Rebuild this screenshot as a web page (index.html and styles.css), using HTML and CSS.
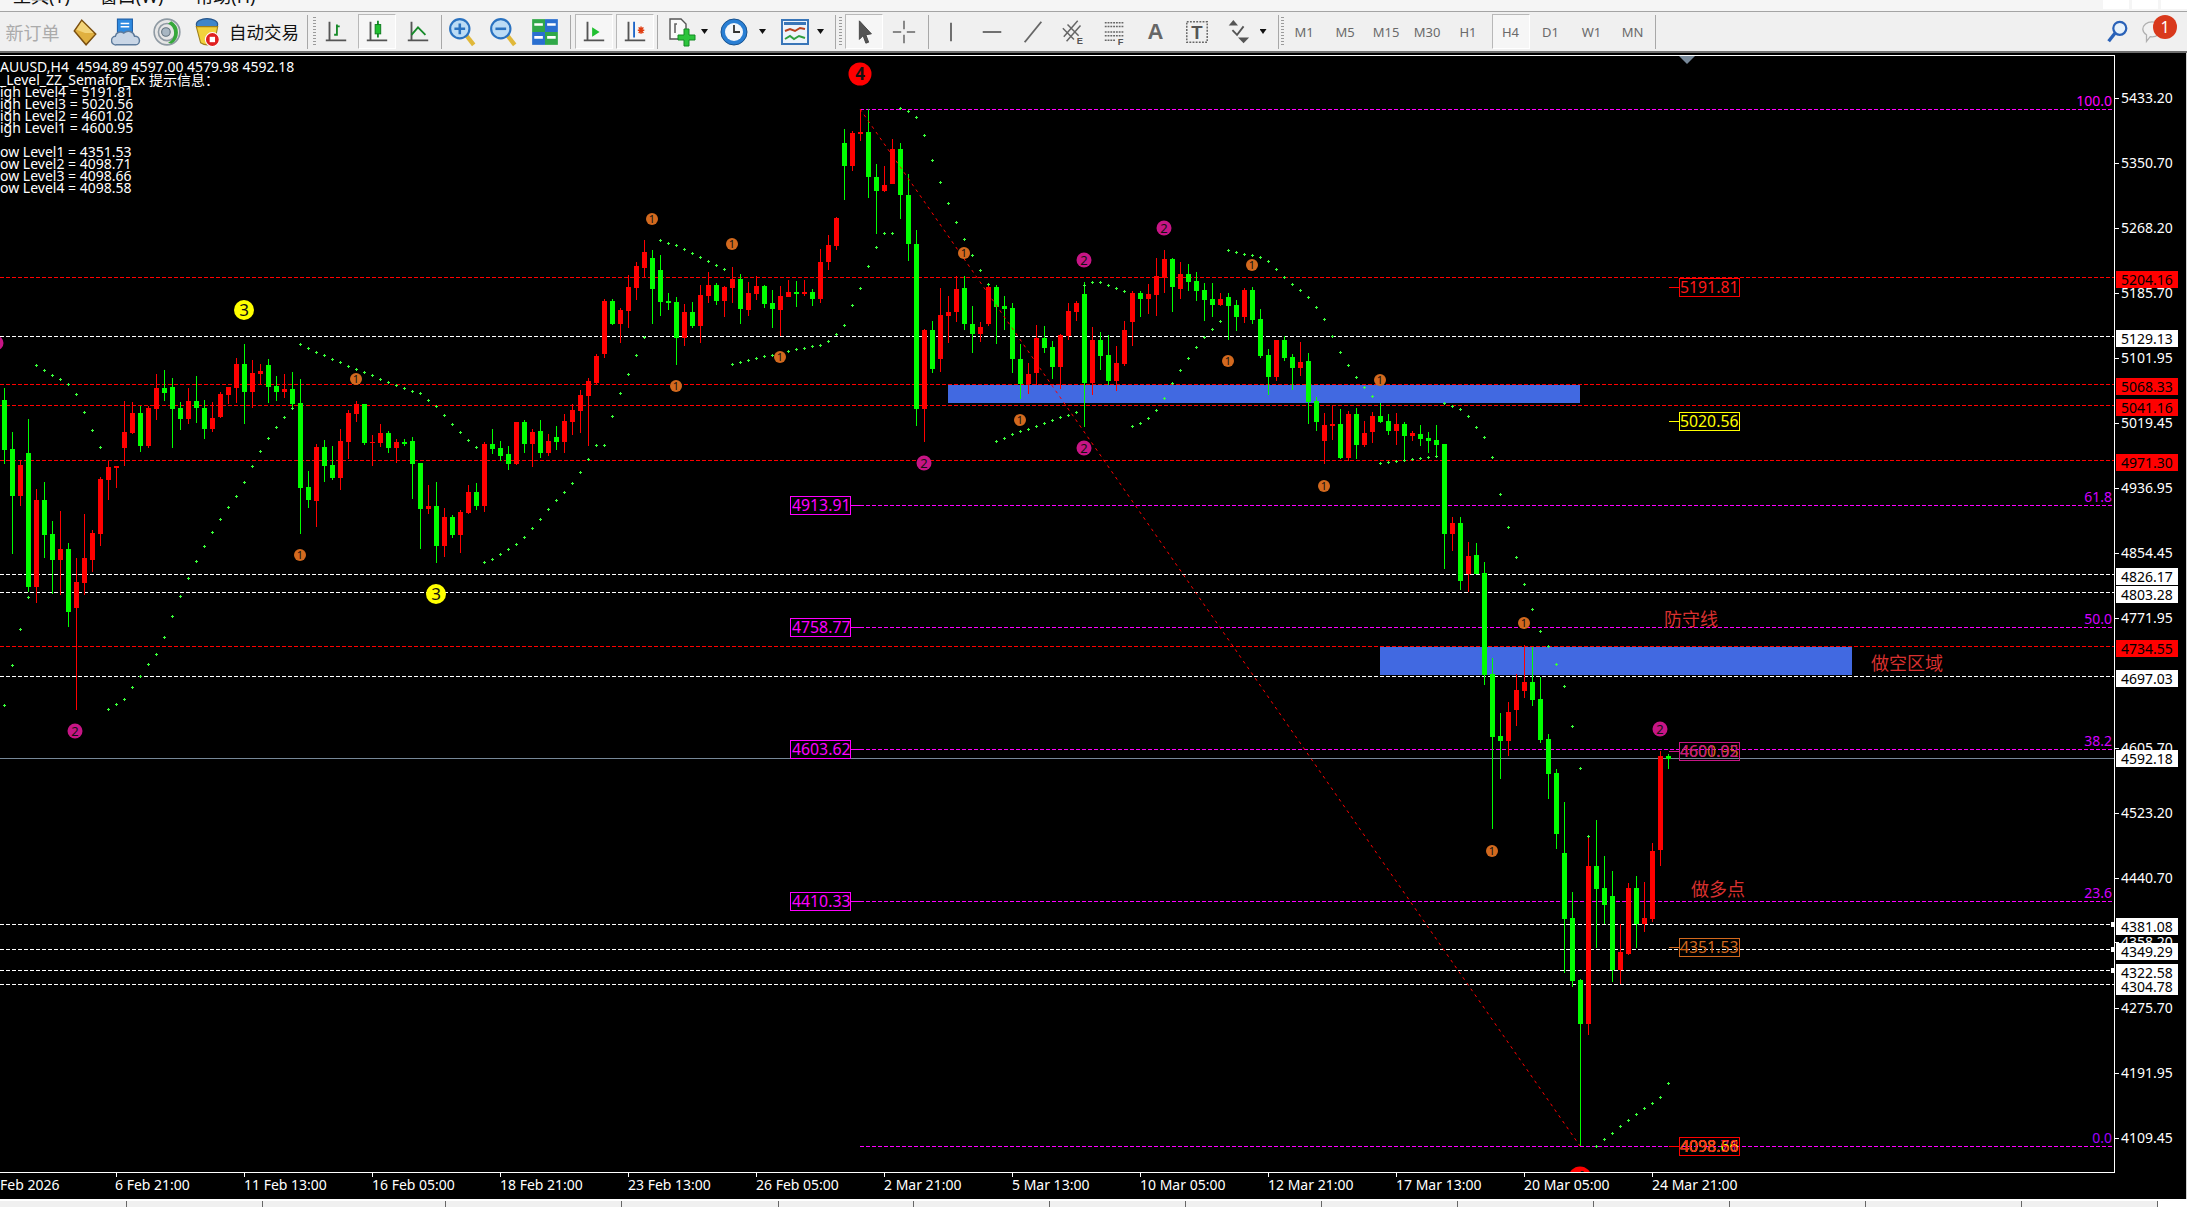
FILE: index.html
```html
<!DOCTYPE html>
<html lang="zh">
<head>
<meta charset="utf-8">
<title>AUUSD,H4</title>
<link rel="stylesheet" href="styles.css">
</head>
<body>
<div class="app">
  <div class="menu">
    <span class="menu-item first">工具(T)</span>
    <span class="menu-item second">窗口(W)</span>
    <span class="menu-item third">帮助(H)</span>
    <span class="winbtns"><i></i><i></i><i></i></span>
  </div>
  <div class="toolbar">
    <span class="neworder">新订单</span>
    <span class="b"><svg class="ic big" viewBox="0 0 28 28"><path d="M11 3 L24 16 L15 26 L4 13Z" fill="#e0b040" stroke="#7a4f10" stroke-width="1.4"/><path d="M11 4 L22 15 L14 15 L6 12Z" fill="#f3d47a"/></svg></span>
    <span class="b"><svg class="ic big" viewBox="0 0 28 28"><path d="M6 2H20V15H6Z" fill="#2d8ae0" stroke="#1c5fa8"/><path d="M9 6h8M9 9h8" stroke="#fff" stroke-width="1.4"/><path d="M5 26a4 4 0 0 1-1-8a5 5 0 0 1 8-3a6 6 0 0 1 10 3a4 4 0 0 1 1 8Z" fill="#c9d6e6" stroke="#5d7b9c" stroke-width="1.4"/></svg></span>
    <span class="b"><svg class="ic big" viewBox="0 0 28 28"><circle cx="14" cy="14" r="12" fill="#e6e6e6" stroke="#8f9aa3" stroke-width="1.5"/><circle cx="14" cy="14" r="8" fill="none" stroke="#8f9aa3" stroke-width="1.5"/><circle cx="13" cy="14" r="4" fill="#a8b6c2" stroke="#60707c"/><path d="M18 4a12 12 0 0 1 0 21l-3-1a10 10 0 0 0 0-18Z" fill="#35a83a"/></svg></span>
    <span class="b narrow"><svg class="ic big" viewBox="0 0 28 28"><ellipse cx="14" cy="7" rx="10" ry="5.5" fill="#3f86c9" stroke="#24548a"/><path d="M4 9 L8 24 Q14 28 21 24 L24 9Z" fill="#f2d23c" stroke="#a0801a"/><circle cx="19" cy="21" r="6.5" fill="#e02020" stroke="#fff" stroke-width="1"/><rect x="16.5" y="18.5" width="5" height="5" fill="#fff"/></svg></span>
    <span class="autotrade">自动交易</span>
    <span class="sep"></span><span class="grip g4"></span>
    <span class="b"><svg class="ic" viewBox="0 0 28 28"><path class="ax" d="M7 3V24M3 23H25"/><path class="gr" d="M15 6V17H12M15 8H18"/></svg></span>
    <span class="b on"><svg class="ic" viewBox="0 0 28 28"><path class="ax" d="M7 3V24M3 23H25"/><path class="gr" d="M15 2V20"/><rect x="12" y="6" width="6" height="10" fill="#20c030" stroke="#0c7a1c"/></svg></span>
    <span class="b"><svg class="ic" viewBox="0 0 28 28"><path class="ax" d="M7 3V24M3 23H25"/><path class="gr" d="M7 17L14 9L22 17"/></svg></span>
    <span class="sep m25"></span>
    <span class="b"><svg class="ic big" viewBox="0 0 28 28"><path d="M17 17L24 26" stroke="#e0b83a" stroke-width="4"/><circle cx="11" cy="11" r="9" fill="#bcdcf5" stroke="#2a72c0" stroke-width="2"/><path d="M6 11H16M11 6V16" stroke="#2a72c0" stroke-width="2.4"/></svg></span>
    <span class="b"><svg class="ic big" viewBox="0 0 28 28"><path d="M17 17L24 26" stroke="#e0b83a" stroke-width="4"/><circle cx="11" cy="11" r="9" fill="#bcdcf5" stroke="#2a72c0" stroke-width="2"/><path d="M6 11H16" stroke="#2a72c0" stroke-width="2.4"/></svg></span>
    <span class="b"><svg class="ic big" viewBox="0 0 28 28"><rect x="2" y="2" width="12" height="12" fill="#30a848"/><rect x="14" y="2" width="12" height="12" fill="#2a6fd0"/><rect x="2" y="14" width="12" height="12" fill="#2a6fd0"/><rect x="14" y="14" width="12" height="12" fill="#30a848"/><path d="M4 7h8M16 7h8M4 19h8M16 19h8" stroke="#fff" stroke-width="2.4"/></svg></span>
    <span class="sep m5"></span>
    <span class="b on p35"><svg class="ic" viewBox="0 0 28 28"><path class="ax" d="M7 3V24M3 23H25"/><path d="M12 9L20 14L12 19Z" fill="#20c030"/></svg></span>
    <span class="b on"><svg class="ic" viewBox="0 0 28 28"><path class="ax" d="M7 3V24M3 23H25"/><path d="M13 3V20" stroke="#1c66c8" stroke-width="2"/><path d="M17 12h7M20.5 8v8M18 9l5 6M23 9l-5 6" stroke="#e03c10" stroke-width="1.6"/></svg></span>
    <span class="sep m15 r25"></span>
    <span class="b"><svg class="ic big" viewBox="0 0 30 30"><path d="M4 2H15L20 7V22H4Z" fill="#fafafa" stroke="#555" stroke-width="1.4"/><path d="M11 7H9v9" fill="none" stroke="#666" stroke-width="1.6"/><path d="M18 12h5v6h6v5h-6v6h-5v-6h-6v-5h6Z" fill="#2cc43c" stroke="#128a22"/></svg></span>
    <span class="dd r5"></span>
    <span class="b"><svg class="ic big" viewBox="0 0 30 30"><circle cx="15" cy="15" r="13" fill="#2a7fd4" stroke="#17528f"/><circle cx="15" cy="15" r="9" fill="#f3f6fa"/><path d="M15 8V15H21" fill="none" stroke="#333" stroke-width="1.8"/></svg></span>
    <span class="dd m5 r85"></span>
    <span class="b"><svg class="ic big" viewBox="0 0 30 30"><rect x="2" y="3" width="26" height="24" fill="#eef4fb" stroke="#3a76b8" stroke-width="2"/><path d="M4 5h22v3H4Z" fill="#3a76b8"/><path d="M5 14l5-2 5 2 5-3 5 1" fill="none" stroke="#b8401c" stroke-width="2"/><path d="M5 22l5-3 4 3 5-3 6 2" fill="none" stroke="#30a040" stroke-width="2"/></svg></span>
    <span class="dd m15"></span>
    <span class="sep m11"></span><span class="grip g25"></span>
    <span class="b on m3 r1"><svg class="ic" viewBox="0 0 28 28"><path d="M9 2V22L13 18L16 26L19 25L16 17L22 16Z" fill="#555" stroke="#444"/></svg></span>
    <span class="b"><svg class="ic" viewBox="0 0 28 28"><path d="M14 2V11M14 17V26M2 14H11M17 14H26" stroke="#666" stroke-width="1.6"/></svg></span>
    <span class="sep m35 r15"></span>
    <span class="b"><svg class="ic" viewBox="0 0 28 28"><path d="M14 4V24" stroke="#666" stroke-width="2"/></svg></span>
    <span class="b"><svg class="ic" viewBox="0 0 28 28"><path d="M4 14H24" stroke="#666" stroke-width="2"/></svg></span>
    <span class="b"><svg class="ic" viewBox="0 0 28 28"><path d="M5 25L23 3" stroke="#666" stroke-width="2"/></svg></span>
    <span class="b"><svg class="ic" viewBox="0 0 28 28"><path d="M3 19L18 2M6 24L21 7M2 10L14 22M7 6L19 18" stroke="#666" stroke-width="1.6" fill="none"/><text class="ictxt" x="17" y="27">E</text></svg></span>
    <span class="b"><svg class="ic" viewBox="0 0 28 28"><path d="M3 4H24M3 8H24M3 14H24M3 18H24M3 23H14" stroke="#666" stroke-width="1.6" stroke-dasharray="2 1" fill="none"/><text class="ictxt" x="17" y="28">F</text></svg></span>
    <span class="b"><span class="atxt">A</span></span>
    <span class="b"><svg class="ic" viewBox="0 0 28 28"><rect x="3" y="3" width="22" height="22" fill="none" stroke="#666" stroke-width="1.6" stroke-dasharray="2 1.4"/><text class="ttxt" x="14" y="21">T</text></svg></span>
    <span class="b"><svg class="ic" viewBox="0 0 28 28"><path d="M9 1L14 7H4Z" fill="#555"/><path d="M8 12L13 17L20 8" fill="none" stroke="#555" stroke-width="2"/><path d="M20 26L14 20H26Z" fill="#555"/></svg></span>
    <span class="dd m15"></span>
    <span class="sep m11"></span><span class="grip g2"></span>
    <span class="b tf">M1</span><span class="b tf">M5</span><span class="b tf">M15</span><span class="b tf">M30</span><span class="b tf">H1</span>
    <span class="b tf on m3 r05">H4</span>
    <span class="b tf">D1</span><span class="b tf">W1</span><span class="b tf">MN</span>
    <span class="sep m2"></span>
    <span class="tools-right">
      <span class="b search"><svg class="ic" viewBox="0 0 28 28"><circle cx="17" cy="10" r="7" fill="#e8f2fb" stroke="#2a62b8" stroke-width="2.4"/><path d="M12 15L5 24" stroke="#2a62b8" stroke-width="3.6"/></svg></span>
      <span class="chat"><svg class="ic" viewBox="0 0 28 28"><path d="M3 11a10 8 0 0 1 20 0a10 8 0 0 1-12 8l-4 5v-7a8 8 0 0 1-4-6Z" fill="#f2f2f2" stroke="#b0b0b0" stroke-width="1.4"/></svg><span class="badge">1</span></span>
    </span>
  </div>

  <div class="chart">
    <svg class="plot" viewBox="0 53 2186 1146" width="2186" height="1146">
      <defs><clipPath id="plotclip"><rect x="0" y="56" width="2114" height="1116"/></clipPath></defs>
      <g clip-path="url(#plotclip)">
        <rect class="zone" x="948" y="385" width="632" height="18"/>
        <rect class="zone" x="1380" y="647" width="472" height="28"/>

        <g class="lines red">
          <line x1="0" x2="2114" y1="277.5" y2="277.5"/><line x1="0" x2="2114" y1="384.5" y2="384.5"/>
          <line x1="0" x2="2114" y1="405.5" y2="405.5"/><line x1="0" x2="2114" y1="460.5" y2="460.5"/>
          <line x1="0" x2="2114" y1="646.5" y2="646.5"/>
        </g>
        <g class="lines white">
          <line x1="0" x2="2114" y1="336.5" y2="336.5"/><line x1="0" x2="2114" y1="574.5" y2="574.5"/>
          <line x1="0" x2="2114" y1="592.5" y2="592.5"/><line x1="0" x2="2114" y1="676.5" y2="676.5"/>
          <line x1="0" x2="2114" y1="924.5" y2="924.5"/><line x1="0" x2="2114" y1="949.5" y2="949.5"/>
          <line x1="0" x2="2114" y1="970.5" y2="970.5"/><line x1="0" x2="2114" y1="984.5" y2="984.5"/>
        </g>
        <g class="lines fib">
          <line x1="860" x2="2112" y1="109.5" y2="109.5"/><line x1="860" x2="2112" y1="505.5" y2="505.5"/>
          <line x1="860" x2="2112" y1="627.5" y2="627.5"/><line x1="860" x2="2112" y1="749.5" y2="749.5"/>
          <line x1="860" x2="2112" y1="901.5" y2="901.5"/><line x1="860" x2="2112" y1="1146.5" y2="1146.5"/>
        </g>
        <line class="bid" x1="0" x2="2114" y1="758.5" y2="758.5"/>

        <g id="candles"></g>
        <path id="sar" class="sar"/>
        <line class="zigzag" x1="860" y1="109" x2="1580" y2="1146"/>

        <g class="fibtags">
          <rect x="790.5" y="496.5" width="60" height="18"/><path d="M851 505.5H862"/><text x="792" y="510">4913.91</text>
          <rect x="790.5" y="618.5" width="60" height="18"/><path d="M851 627.5H862"/><text x="792" y="632">4758.77</text>
          <rect x="790.5" y="740.5" width="60" height="18"/><path d="M851 749.5H862"/><text x="792" y="754">4603.62</text>
          <rect x="790.5" y="892.5" width="60" height="18"/><path d="M851 901.5H862"/><text x="792" y="906">4410.33</text>
        </g>
        <g class="tag tag-red"><rect x="1679.5" y="278.5" width="60" height="18"/><path d="M1669 287.5H1679"/><text x="1681" y="292">5191.81</text></g>
        <g class="tag tag-yellow"><rect x="1679.5" y="412.5" width="60" height="18"/><path d="M1669 421.5H1679"/><text x="1681" y="426">5020.56</text></g>
        <g class="tag tag-pink"><rect x="1679.5" y="742.5" width="60" height="18"/><path d="M1669 751.5H1679"/><text class="under" x="1681" y="756">4600.95</text><text x="1681" y="756">4601.02</text></g>
        <g class="tag tag-orange"><rect x="1679.5" y="938.5" width="60" height="18"/><path d="M1669 947.5H1679"/><text x="1681" y="952">4351.53</text></g>
        <g class="tag tag-red"><rect x="1679.5" y="1137.5" width="60" height="18"/><path d="M1669 1146.5H1679"/><text class="lo2" x="1681" y="1151">4098.71</text><text class="lo3" x="1681" y="1151">4098.66</text><text x="1681" y="1151">4098.58</text></g>

        <text class="note" x="1664" y="626">防守线</text>
        <text class="note" x="1871" y="670">做空区域</text>
        <text class="note" x="1691" y="896">做多点</text>

        <g class="fiblabels">
          <text class="l100" x="2112" y="106">100.0</text>
          <text x="2112" y="502">61.8</text>
          <text x="2112" y="624">50.0</text>
          <text x="2112" y="746">38.2</text>
          <text x="2112" y="898">23.6</text>
          <text class="l0" x="2112" y="1143">0.0</text>
        </g>

        <g class="mk m3k" transform="translate(244 310)"><circle r="10"/><text y="6">3</text></g>
        <g class="mk m3k" transform="translate(436 594)"><circle r="10"/><text y="6">3</text></g>
        <g class="mk m4k" transform="translate(860 74)"><circle r="11.5"/><text y="6">4</text></g>
        <g class="mk m4k" transform="translate(1580 1178)"><circle r="11.5"/><text y="6">4</text></g>
        <g class="mk m2k" transform="translate(924 463)"><circle r="7.5"/><text y="4.5">2</text></g>
        <g class="mk m2k" transform="translate(1084 260)"><circle r="7.5"/><text y="4.5">2</text></g>
        <g class="mk m2k" transform="translate(1084 448)"><circle r="7.5"/><text y="4.5">2</text></g>
        <g class="mk m2k" transform="translate(1164 228)"><circle r="7.5"/><text y="4.5">2</text></g>
        <g class="mk m2k" transform="translate(75 731)"><circle r="7.5"/><text y="4.5">2</text></g>
        <g class="mk m2k" transform="translate(-4 343)"><circle r="7.5"/></g>
        <g class="mk m2k" transform="translate(1660 729)"><circle r="7.5"/><text y="4.5">2</text></g>
        <g class="mk m1k" transform="translate(652 219)"><circle r="6"/><text y="4">1</text></g>
        <g class="mk m1k" transform="translate(732 244)"><circle r="6"/><text y="4">1</text></g>
        <g class="mk m1k" transform="translate(780 357)"><circle r="6"/><text y="4">1</text></g>
        <g class="mk m1k" transform="translate(964 253)"><circle r="6"/><text y="4">1</text></g>
        <g class="mk m1k" transform="translate(1020 420)"><circle r="6"/><text y="4">1</text></g>
        <g class="mk m1k" transform="translate(1252 265)"><circle r="6"/><text y="4">1</text></g>
        <g class="mk m1k" transform="translate(1228 361)"><circle r="6"/><text y="4">1</text></g>
        <g class="mk m1k" transform="translate(1380 380)"><circle r="6"/><text y="4">1</text></g>
        <g class="mk m1k" transform="translate(1324 486)"><circle r="6"/><text y="4">1</text></g>
        <g class="mk m1k" transform="translate(356 379)"><circle r="6"/><text y="4">1</text></g>
        <g class="mk m1k" transform="translate(300 555)"><circle r="6"/><text y="4">1</text></g>
        <g class="mk m1k" transform="translate(676 386)"><circle r="6"/><text y="4">1</text></g>
        <g class="mk m1k" transform="translate(1524 623)"><circle r="6"/><text y="4">1</text></g>
        <g class="mk m1k" transform="translate(1492 851)"><circle r="6"/><text y="4">1</text></g>

        <g class="info">
          <text x="0" y="72">AUUSD,H4  4594.89 4597.00 4579.98 4592.18</text>
          <text x="0" y="85">_Level_ZZ_Semafor_Ex 提示信息：</text>
          <text x="0" y="97">igh Level4 = 5191.81</text>
          <text x="0" y="109">igh Level3 = 5020.56</text>
          <text x="0" y="121">igh Level2 = 4601.02</text>
          <text x="0" y="133">igh Level1 = 4600.95</text>
          <text x="0" y="157">ow Level1 = 4351.53</text>
          <text x="0" y="169">ow Level2 = 4098.71</text>
          <text x="0" y="181">ow Level3 = 4098.66</text>
          <text x="0" y="193">ow Level4 = 4098.58</text>
        </g>
        <path class="shift-mark" d="M1679 56H1695L1687 64Z"/>
      </g>

      <path class="frame" d="M0 55.5H2114.5V1172.5H0"/>
      <path class="ticks" d="M2115 98H2119M2115 163H2119M2115 228H2119M2115 293H2119M2115 358H2119M2115 423H2119M2115 488H2119M2115 553H2119M2115 618H2119M2115 748H2119M2115 813H2119M2115 878H2119M2115 942H2119M2115 1008H2119M2115 1073H2119M2115 1138H2119M116.5 1173V1177M244.5 1173V1177M372.5 1173V1177M500.5 1173V1177M628.5 1173V1177M756.5 1173V1177M884.5 1173V1177M1012.5 1173V1177M1140.5 1173V1177M1268.5 1173V1177M1396.5 1173V1177M1524.5 1173V1177M1652.5 1173V1177"/>

      <g class="axis">
        <text x="2121" y="103">5433.20</text><text x="2121" y="168">5350.70</text>
        <text x="2121" y="233">5268.20</text><text x="2121" y="298">5185.70</text>
        <text x="2121" y="363">5101.95</text><text x="2121" y="428">5019.45</text>
        <text x="2121" y="493">4936.95</text><text x="2121" y="558">4854.45</text>
        <text x="2121" y="623">4771.95</text><text x="2121" y="753">4605.70</text>
        <text x="2121" y="818">4523.20</text><text x="2121" y="883">4440.70</text>
        <text x="2121" y="947">4358.20</text><text x="2121" y="1013">4275.70</text>
        <text x="2121" y="1078">4191.95</text><text x="2121" y="1143">4109.45</text>
      </g>
      <g class="pricebox pb-red">
        <rect x="2116" y="271" width="62" height="17"/><text x="2121" y="285">5204.16</text>
        <rect x="2116" y="378" width="62" height="17"/><text x="2121" y="392">5068.33</text>
        <rect x="2116" y="399" width="62" height="17"/><text x="2121" y="413">5041.16</text>
        <rect x="2116" y="454" width="62" height="17"/><text x="2121" y="468">4971.30</text>
        <rect x="2116" y="640" width="62" height="17"/><text x="2121" y="654">4734.55</text>
      </g>
      <g class="pricebox pb-white">
        <rect x="2116" y="330" width="62" height="17"/><text x="2121" y="344">5129.13</text>
        <rect x="2116" y="568" width="62" height="17"/><text x="2121" y="582">4826.17</text>
        <rect x="2116" y="586" width="62" height="17"/><text x="2121" y="600">4803.28</text>
        <rect x="2116" y="670" width="62" height="17"/><text x="2121" y="684">4697.03</text>
        <rect x="2116" y="750" width="62" height="17"/><text x="2121" y="764">4592.18</text>
        <rect x="2116" y="918" width="62" height="17"/><text x="2121" y="932">4381.08</text>
        <rect x="2116" y="943" width="62" height="17"/><text x="2121" y="957">4349.29</text>
        <rect x="2116" y="964" width="62" height="17"/><text x="2121" y="978">4322.58</text>
        <rect x="2116" y="978" width="62" height="17"/><text x="2121" y="992">4304.78</text>
      </g>
      <path class="blobs" d="M2111 922h3v5h-3ZM2111 947h3v5h-3ZM2111 968h3v5h-3Z"/>

      <g class="axis">
        <text x="0" y="1190">Feb 2026</text>
        <text x="115" y="1190">6 Feb 21:00</text>
        <text x="244" y="1190">11 Feb 13:00</text>
        <text x="372" y="1190">16 Feb 05:00</text>
        <text x="500" y="1190">18 Feb 21:00</text>
        <text x="628" y="1190">23 Feb 13:00</text>
        <text x="756" y="1190">26 Feb 05:00</text>
        <text x="884" y="1190">2 Mar 21:00</text>
        <text x="1012" y="1190">5 Mar 13:00</text>
        <text x="1140" y="1190">10 Mar 05:00</text>
        <text x="1268" y="1190">12 Mar 21:00</text>
        <text x="1396" y="1190">17 Mar 13:00</text>
        <text x="1524" y="1190">20 Mar 05:00</text>
        <text x="1652" y="1190">24 Mar 21:00</text>
      </g>
    </svg>
  </div>

  <div class="tabs">
    <span class="tab t1"></span><span class="tab t2"></span><span class="tab t3"></span><span class="tab t4"></span>
    <span class="tab t5"></span><span class="tab t6"></span><span class="tab t7"></span><span class="tab t8"></span>
    <span class="tab t9"></span><span class="tab t10"></span><span class="tab t11"></span><span class="tab t12"></span>
    <span class="tab t13"></span><span class="tab t14"></span><span class="tab t15"></span>
    <span class="tab-gap"></span><span class="tab-rest"></span>
  </div>
</div>
<script src="chart.js"></script>
</body>
</html>
```

FILE: styles.css
```css
* { box-sizing: border-box; }
html, body { margin: 0; padding: 0; background: #000; }
body { font-family: "Noto Sans", "Noto Sans CJK SC", sans-serif; }
.app { width: 2187px; height: 1207px; display: flex; flex-direction: column; overflow: hidden; }

/* menu bar: only the lower edge is on screen */
.menu { height: 12px; flex: none; background: #f5f5f5; border-bottom: 1px solid #a4a4a4; display: flex; overflow: hidden; }
.menu-item { font-size: 18px; line-height: 18px; margin-top: -13px; color: #111; white-space: nowrap; }
.menu-item.first { margin-left: 13px; }
.menu-item.second { margin-left: 30px; }
.menu-item.third { margin-left: 32px; }
.winbtns { margin-left: auto; display: flex; gap: 3px; height: 9px; }
.winbtns i { width: 26px; background: #fff; display: block; }

/* toolbar */
.toolbar { height: 41px; flex: none; background: #f0f0f0; border-bottom: 2px solid #6e6e6e; display: flex; align-items: center; }
.neworder { width: 64.5px; padding-left: 5.5px; font-size: 18px; color: #ababab; white-space: nowrap; }
.autotrade { width: 81.5px; padding-left: 3.5px; font-size: 17.5px; color: #111; white-space: nowrap; }
.b { width: 41px; height: 35px; flex: none; display: flex; align-items: center; justify-content: center; }
.b.narrow { width: 38px; }
.b.on { width: 38px; margin-left: 1.5px; margin-right: 1.5px; background: #f6f6f6; border: 1px solid; border-color: #b8b8b8 #fff #fff #b8b8b8; }
.ic { width: 26px; height: 26px; display: block; }
.ic.big { width: 30px; height: 30px; }
.ax { stroke: #555; stroke-width: 2; fill: none; }
.gr { stroke: #178a2a; stroke-width: 2; fill: none; }
.ictxt { font: bold 10px "Liberation Sans", sans-serif; fill: #555; }
.ttxt { font: bold 20px "Liberation Sans", sans-serif; fill: #555; text-anchor: middle; }
.atxt { font: bold 22px "Liberation Sans", sans-serif; color: #666; }
.tf { font-size: 13px; color: #6a6a6a; }
.sep { width: 1px; height: 34px; flex: none; background: #a8a8a8; }
.grip { width: 3px; height: 30px; flex: none; background-image: repeating-linear-gradient(#9a9a9a 0 1px, transparent 1px 3px); }
.dd { width: 7px; height: 5px; flex: none; background: #111; clip-path: polygon(0 0, 100% 0, 50% 100%); }
.g2 { margin-left: 2px; } .g25 { margin-left: 2.5px; } .g4 { margin-left: 4.5px; }
.m15 { margin-left: 1.5px; } .m2 { margin-left: 2px; } .m25 { margin-left: 2.5px; } .m35 { margin-left: 3.5px; }
.m5 { margin-left: 5px; } .m11 { margin-left: 11px; }
.r5 { margin-right: 5px; } .r85 { margin-right: 8.5px; } .r15 { margin-right: 1.5px; } .r25 { margin-right: 2.5px; }
.sep.m5 { margin-right: 2px; }
.b.m3 { margin-left: 3px; } .b.r1 { margin-right: .5px; } .b.r05 { margin-right: .5px; }
.tools-right { margin-left: auto; display: flex; align-items: center; }
.search { width: 37px; }
.chat { position: relative; width: 52px; height: 35px; display: flex; align-items: center; padding-left: 5px; }
.badge { position: absolute; left: 18px; top: 1px; width: 24px; height: 24px; border-radius: 50%; background: #d9391c; color: #fff; font-size: 16px; line-height: 24px; text-align: center; }

/* chart */
.chart { height: 1146px; flex: none; background: #000; border-right: 1px solid #d0d0d0; overflow: hidden; }
.plot { display: block; }
.plot text { font-family: "Noto Sans", "Noto Sans CJK SC", sans-serif; font-size: 14px; white-space: pre; }
.zone { fill: #4169e1; }
.lines line { stroke-width: 1; stroke-dasharray: 4 2; shape-rendering: crispEdges; }
.lines.red line { stroke: #ff0000; }
.lines.white line { stroke: #ffffff; }
.lines.fib line { stroke: #ff00ff; }
.bid { stroke: #778899; stroke-width: 1; shape-rendering: crispEdges; }
.zigzag { stroke: #ff0000; stroke-width: 1; stroke-dasharray: 3 4; }
.sar { stroke: #39ff39; stroke-width: 1; fill: none; shape-rendering: crispEdges; }
.fibtags rect { fill: #000; stroke: #ff00ff; shape-rendering: crispEdges; }
.fibtags path { stroke: #ff00ff; fill: none; shape-rendering: crispEdges; }
.plot .fibtags text { fill: #ff00ff; font-size: 15.8px; transform: translateY(1px); }
.tag rect { fill: #000; fill-opacity: 0; shape-rendering: crispEdges; }
.tag path { fill: none; shape-rendering: crispEdges; }
.plot .tag text { font-size: 15.8px; transform: translate(-1px, 1px); }
.tag-red rect, .tag-red path { stroke: #ff0000; } .tag-red text { fill: #ff1a1a; }
.tag-yellow rect, .tag-yellow path { stroke: #ffff00; } .tag-yellow text { fill: #ffff00; }
.tag-orange rect, .tag-orange path { stroke: #d2691e; } .tag-orange text { fill: #d2691e; }
.tag-pink rect, .tag-pink path { stroke: #c71585; } .tag-pink text { fill: #c71585; }
.tag-pink text.under { fill: #d2691e; }
.tag-red text.lo2 { fill: #c71585; } .tag-red text.lo3 { fill: #ffff00; }
.plot .note { fill: #d8302f; font-size: 18px; }
.fiblabels text { fill: #d400ff; text-anchor: end; }
.fiblabels text.l100 { fill: #ff00ff; }
.fiblabels text.l0 { fill: #a000ff; }
.mk text { fill: #111; text-anchor: middle; }
.plot .m3k text { font-size: 17px; }
.plot .m4k text { font-size: 17px; font-weight: bold; }
.plot .m2k text { font-size: 13px; }
.plot .m1k text { font-size: 11px; }
.m3k circle { fill: #ffff00; } .m4k circle { fill: #ff0000; } .m2k circle { fill: #c71585; } .m1k circle { fill: #d2691e; }
.info text { fill: #fff; }
.shift-mark { fill: #778899; }
.frame { stroke: #fff; stroke-width: 1; fill: none; shape-rendering: crispEdges; }
.ticks { stroke: #fff; stroke-width: 1; fill: none; shape-rendering: crispEdges; }
.axis text { fill: #fff; }
.pb-red rect { fill: #ff0000; } .pb-white rect { fill: #fff; }
.pricebox text { fill: #000; }
.blobs { fill: #fff; }

/* tab strip: cropped by the window edge */
.tabs { height: 8px; flex: none; border-top: 2px solid #fff; background: #f0f0f0; display: flex; }
.tab { height: 6px; border-right: 1px solid #666; flex: none; }
.t1 { width: 127px; } .t2 { width: 136px; } .t3 { width: 183px; } .t4 { width: 176px; } .t5 { width: 157px; }
.t6 { width: 135px; } .t7 { width: 136px; } .t8 { width: 136px; } .t9 { width: 136px; } .t10 { width: 136px; }
.t11 { width: 136px; } .t12 { width: 136px; } .t13 { width: 136px; } .t14 { width: 156px; } .t15 { width: 136px; }
.tab-gap { width: 135px; flex: none; background: #fff; border-right: 1px solid #333; }
.tab-rest { flex: 1; border-top: 1px solid #333; }
```

FILE: chart.js
```js
// Candle rows: [first bar, y base, y scale, "colour high top bottom low, ..."]
var candleRows = [
  [0, 280, 3, "g323 360 510 552,g456 507 648 822,r540 555 648 678,g417 519 921 937,r628 660 921 971,g606 660 765 834,g723 762 840 942,r693 807 840 945,g789 807 996 1041,r834 906 984 1290,r702 834 909 945,r750 759 840 876,r591 597 762 798,r540 561 600 660,r558 558 564 624,r363 456 504 558,r366 399 459 462,g378 399 498 516,r378 384 498 504,r282 324 387 420,g270 324 339 363,g294 321 387 504,g366 384 417 450,r324 363 417 432,g288 363 384 429,g360 384 447 477,r366 414 447 456,r336 342 411 414,r321 321 345 372,r234 252 324 369,g192 252 336 432,r240 279 336 384,r252 273 282 315,g237 255 321 369,g288 318 336 363,r282 327 336 354,g276 327 372 390,g297 369 624 762,g573 621 660 684,r492 501 663 741,g480 501 558 606,g498 555 594 600,r447 483 594 630,r390 399 486 537,r363 372 402 426,g372 372 489 495,r465 486 489 558,r432 459 489 500,g453 459 504 519,r477 486 504 549,g477 486 492 498,g471 483 552 657,g549 549 687 807,r615 678 688 702,g606 678 798 849,r684 711 798 831,g705 711 765 774,r690 696 765 819,r615 636 699 702,g609 636 678 690,r486 492 678 696,g447 492 507 522,g483 504 528 543,g498 522 552 570,r426 426 552 555,g420 426 492 519,r447 456 492 561,g420 453 519 534,r462 483 519 528,g438 471 486 510,r402 423 486 519,r372 390 426 465,r330 345 393 459,r294 303 348 498,r222 228 309 315,r57 63 222 234,g57 63 132 135,r84 90 132 189"],
  [78, 0, 1, "r275 287 311 328,r262 266 288 300,r240 252 268 278,g250 258 289 324,g255 270 302 316,g293 301 303 310,g297 302 338 365,r304 312 338 346,g302 312 326 328,r285 295 326 343"],
  [88, 100, 3, "r516 555 588 609,g549 555 603 615,r558 561 603 651,r501 537 564 609,g522 537 627 672,r546 579 630 648,r528 558 582 600,g555 558 612 624,g570 609 627 684,r558 588 630 708,r540 576 591 591,g543 576 582 621,r540 576 582 588,g567 576 597 618,r447 486 597 609,r405 435 486 510,r351 354 438 450,g87 129 198 300,r93 99 198 213,r28 96 102 123,g28 96 231 294,g192 231 273 402,r198 255 273 276,r117 147 252 252,g129 147 285 357,g222 285 432 483,g390 432 927 978,r687 690 927 1026,g663 690 807 819,r564 645 777 816,r588 636 648 729,r528 567 636 666,g528 564 672 690,g618 672 702 759,r666 681 702 726,r555 561 672 678,g555 561 621 732,g588 618 627 690,g609 624 777 819,g732 777 852 897,r789 822 852 882,r675 714 819 855,g678 714 744 759,g723 741 801 837,r702 705 801 867,r609 633 708 720,r603 609 636 663,g546 582 849 981,r681 720 849 885,g696 720 768 810,g705 765 843 855,r738 789 843 873,r663 690 792 798,r573 579 666 738,g573 579 597 651,r552 582 597 642,r474 528 585 648,r450 477 534 579,g474 477 561 636,r486 522 567 597,g492 522 546 573,g516 543 573 603,g549 570 600 663,g549 597 615 651,r579 597 615 618,g579 591 618 720,g600 615 651 693,r564 570 651 669,g561 570 660 672,g627 657 768 774,g747 765 831 885,r720 720 831 843,g708 720 774 783,g762 771 804 870,r726 786 804 828,g759 783 906 972,g891 903 966 993,r939 975 1023 1092,r918 972 978 1020,g927 972 1074 1077,r933 942 1074 1083,g924 942 1035 1077,r963 999 1035 1041,r936 948 996 1029,g909 948 966 969,g942 963 993 1005,r939 972 993 1035,g966 972 1008 1083,r993 999 1008 1023,g975 1002 1017 1038,g996 1014 1023 1059,g975 1020 1035 1071"],
  [180, 400, 3, "g132 132 402 507,r351 369 402 453,g351 369 543 570,r426 468 522 576,g429 465 522 522,g486 519 825 855,g774 822 1011 1287,g939 1008 1023 1137,r906 936 1023 1068,r822 870 930 978,r735 846 873 894,g741 846 900 918,g831 897 1020 1029,g1002 1017 1122 1197,g1107 1119 1302 1347"],
  [195, 780, 3, "g66 219 417 579,g336 414 603 621,g597 600 732 1098,r168 258 732 765,g120 258 327 504,g228 324 375 432,g273 348 570 606,r432 516 570 612,r309 324 522 525,g288 324 432 504,r306 414 432 456,r189 213 417 426"],
  [207, 0, 1, "r751 756 850 866,g754 756 759 769"]
];

// Parabolic SAR rows: [first bar, y base, y scale, "y y y ..."]
var sarRows = [
  [0, 280, 3, "1276 1156 1048 952 256 271 286 298 313 343 397 451 502 1288 1273 1258 1222 1187 1153 1123 1072 1009 949 895 844 799 757 718 682 649 607 559 514 475 442 412 385 193 205 217 226 238 247 259 268 277 286 298 307 316 325 334 340 361 379 406 433 457 481 502 847 838 823 808 793 772 745 718 688 661 637 610 577 538 496 496 409 340 283 226 172"],
  [82, 0, 1, "240 243 245 249 253"],
  [87, 100, 3, "472 484 496 508 793 787 781 775 769 766 760 754 748 745 739 736 724 703 676 616 565 499 442 400 400 25 34 52 106 181 247 310 367 418 466 511 553 1024 1015 1003 994 988 979 970 961 952 946 937 555 547 547 556 565 574 979 970 955 931 895 850 811 775 742 712 688 664 451 457 463 466 472 484 508 532 553 571 592 622 658 709 757 796 832 862 889 1090 1087 1084 1081 1078 1075 1072 1069 910 919 928 949 982 1012 1072"],
  [187, 400, 3, "283 382 472 553 628 694 739 793 859 979 1105"],
  [198, 780, 3, "168 1099 1078 1060 1039 1021 1003 985 970 952 910"]
];

var NS = "http://www.w3.org/2000/svg";
var BAR_STEP = 8, BAR_ORIGIN = 4;

function rect(parent, x, y, w, h, fill) {
  var r = document.createElementNS(NS, "rect");
  r.setAttribute("x", x);
  r.setAttribute("y", Math.round(y));
  r.setAttribute("width", w);
  r.setAttribute("height", Math.max(1, Math.round(h)));
  r.setAttribute("fill", fill);
  r.setAttribute("shape-rendering", "crispEdges");
  parent.appendChild(r);
}

var group = document.getElementById("candles");
candleRows.forEach(function (row) {
  var bar = row[0], base = row[1], scale = row[2];
  row[3].split(",").forEach(function (item, i) {
    var colour = item.charAt(0) === "g" ? "#00ff00" : "#ff0000";
    var v = item.slice(1).split(" ").map(function (n) { return base + Number(n) / scale; });
    var x = BAR_ORIGIN + BAR_STEP * (bar + i);
    rect(group, x, v[0], 1, v[3] - v[0], colour);
    rect(group, x - 2, v[1], 5, v[2] - v[1], colour);
  });
});

var d = "";
sarRows.forEach(function (row) {
  var bar = row[0], base = row[1], scale = row[2];
  row[3].split(" ").forEach(function (n, i) {
    var x = BAR_ORIGIN + BAR_STEP * (bar + i);
    var y = Math.round(base + Number(n) / scale);
    d += "M" + (x - 1) + " " + (y + 0.5) + "h3M" + (x + 0.5) + " " + (y - 1) + "v3";
  });
});
document.getElementById("sar").setAttribute("d", d);
```
